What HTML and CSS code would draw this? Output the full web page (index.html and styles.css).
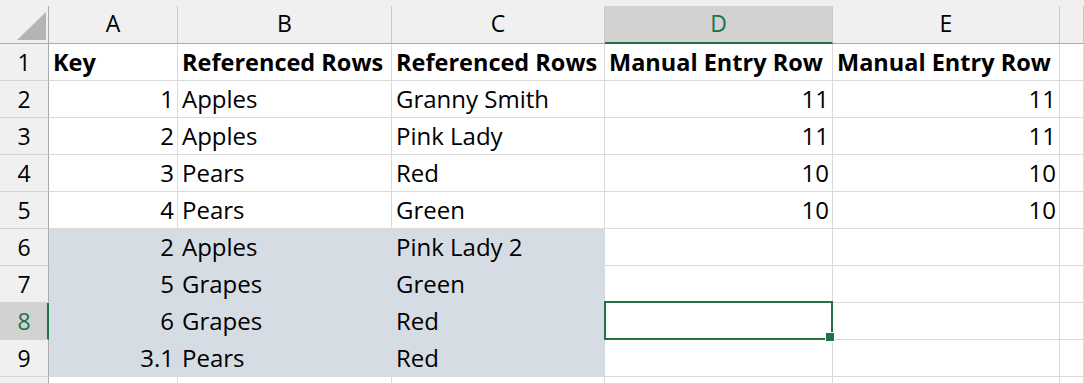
FILE: index.html
```html
<!DOCTYPE html>
<html lang="en">
<head>
    <title>Sheet1</title>
    <link rel="stylesheet" href="styles.css">
</head>
<body>
    <div class="sheet">
        <div class="strip"></div>

        <!-- column headers -->
        <div class="corner">
            <svg width="48" height="37" viewBox="0 0 48 37"><polygon points="17,34 46,34 46,6" fill="#b4b4b4"/></svg>
        </div>
        <div class="ch">A</div>
        <div class="ch">B</div>
        <div class="ch">C</div>
        <div class="ch on">D</div>
        <div class="ch">E</div>
        <div class="ch"></div>

        <div class="rh">1</div>
        <div class="c b">Key</div>
        <div class="c b">Referenced Rows</div>
        <div class="c b">Referenced Rows</div>
        <div class="c b">Manual Entry Row</div>
        <div class="c b">Manual Entry Row</div>
        <div class="c"></div>

        <div class="rh">2</div>
        <div class="c num">1</div>
        <div class="c">Apples</div>
        <div class="c">Granny Smith</div>
        <div class="c num">11</div>
        <div class="c num">11</div>
        <div class="c"></div>

        <div class="rh">3</div>
        <div class="c num">2</div>
        <div class="c">Apples</div>
        <div class="c">Pink Lady</div>
        <div class="c num">11</div>
        <div class="c num">11</div>
        <div class="c"></div>

        <div class="rh">4</div>
        <div class="c num">3</div>
        <div class="c">Pears</div>
        <div class="c">Red</div>
        <div class="c num">10</div>
        <div class="c num">10</div>
        <div class="c"></div>

        <div class="rh">5</div>
        <div class="c num">4</div>
        <div class="c">Pears</div>
        <div class="c">Green</div>
        <div class="c num">10</div>
        <div class="c num">10</div>
        <div class="c"></div>

        <div class="rh">6</div>
        <div class="c num fill">2</div>
        <div class="c fill">Apples</div>
        <div class="c fill">Pink Lady 2</div>
        <div class="c"></div>
        <div class="c"></div>
        <div class="c"></div>

        <div class="rh">7</div>
        <div class="c num fill">5</div>
        <div class="c fill">Grapes</div>
        <div class="c fill">Green</div>
        <div class="c"></div>
        <div class="c"></div>
        <div class="c"></div>

        <div class="rh on">8</div>
        <div class="c num fill">6</div>
        <div class="c fill">Grapes</div>
        <div class="c fill">Red</div>
        <div class="c sel"></div>
        <div class="c"></div>
        <div class="c"></div>

        <div class="rh">9</div>
        <div class="c num fill last">3.1</div>
        <div class="c fill last">Pears</div>
        <div class="c fill last">Red</div>
        <div class="c"></div>
        <div class="c"></div>
        <div class="c"></div>

        <!-- row 10, only its top edge is in view -->
        <div class="rh"></div>
        <div class="c"></div>
        <div class="c"></div>
        <div class="c"></div>
        <div class="c"></div>
        <div class="c"></div>
        <div class="c"></div>
    </div>
</body>
</html>
```

FILE: styles.css
```css
* {
    margin: 0;
    padding: 0;
    box-sizing: border-box;
}
body {
    background: #ffffff;
    color: #000000;
    font-family: "Open Sans", "Liberation Sans", sans-serif;
    width: 1084px;
    height: 384px;
    overflow: hidden;
}
.sheet {
    display: grid;
    grid-template-columns: 49px 129px 214px 213px 228px 227px 1fr;
    grid-template-rows: 6px 38px repeat(9, 37px) 7px;
    height: 384px;
    overflow: hidden;
}
.strip {
    grid-column: 1 / -1;
    background: #f0f0f0;
}
.corner {
    background: #f0f0f0;
    border-right: 1px solid #ababab;
    border-bottom: 1px solid #ababab;
}
.corner svg {
    display: block;
}
.ch {
    background: #f0f0f0;
    border-right: 1px solid #c8c8c8;
    border-bottom: 1px solid #ababab;
    display: flex;
    align-items: flex-end;
    justify-content: center;
    padding-bottom: 4px;
    font-size: 23px;
}
.ch.on {
    background: #d2d2d2;
    color: #217346;
    border-bottom: 2px solid #217346;
    padding-bottom: 3px;
}
.rh {
    background: #f0f0f0;
    border-right: 1px solid #ababab;
    border-bottom: 1px solid #d4d4d4;
    display: flex;
    align-items: flex-end;
    justify-content: center;
    padding-bottom: 2px;
    font-size: 23px;
}
.rh.on {
    background: #d2d2d2;
    color: #217346;
    border-right: 2px solid #217346;
    padding-left: 1px;
}
.c {
    border-right: 1px solid #dadada;
    border-bottom: 1px solid #dadada;
    display: flex;
    align-items: flex-end;
    padding: 0 3px 2px 4px;
    font-size: 24px;
    white-space: nowrap;
}
.b {
    font-weight: 700;
    font-size: 23.5px;
}
.num {
    justify-content: flex-end;
}
.fill {
    background: #d6dce4;
    border-color: #d6dce4;
}
.fill.last {
    border-bottom-color: #dadada;
}
.sel {
    position: relative;
    z-index: 2;
}
.sel::after {
    content: '';
    position: absolute;
    top: -2px;
    left: -1px;
    right: -1px;
    bottom: -1px;
    border: 2px solid #217346;
}
.sel::before {
    content: '';
    position: absolute;
    right: -3px;
    bottom: -3px;
    width: 8px;
    height: 8px;
    background: #217346;
    border: 1px solid #ffffff;
    z-index: 1;
}
```
